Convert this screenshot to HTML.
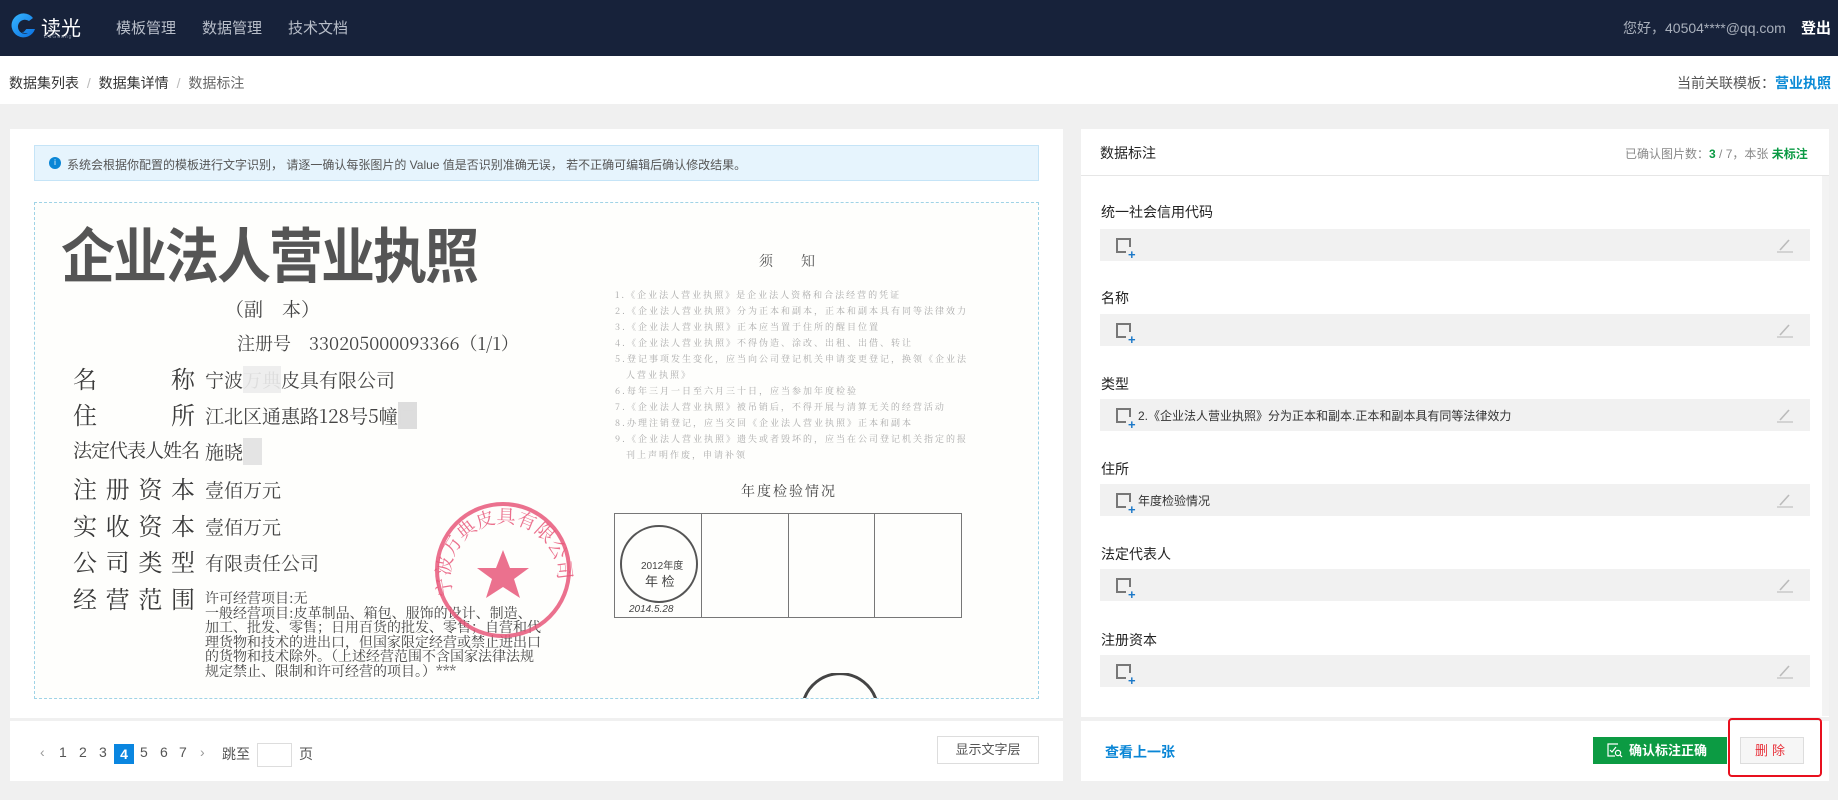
<!DOCTYPE html>
<html><head><meta charset="utf-8"><style>
*{margin:0;padding:0;box-sizing:border-box}
body{width:1838px;height:800px;background:#f0f0f0;font-family:"Liberation Sans","Noto Sans CJK SC",sans-serif;position:relative;overflow:hidden;color:#333}
.a{position:absolute;white-space:nowrap}
.hdr{position:absolute;left:0;top:0;width:1838px;height:56px;background:#17223a}
.nav{color:#b8bec9;font-size:15px;top:17px}
.bc{position:absolute;left:0;top:56px;width:1838px;height:48px;background:#fff}
.card{position:absolute;background:#fff}
.serif{font-family:"Noto Serif CJK SC",serif;color:#444}
.lbl{font-size:24px;color:#3a3a3a;display:flex;justify-content:space-between;width:122px;left:38px}
.note{font-family:"Noto Serif CJK SC",serif;font-size:9px;color:#aaa;letter-spacing:2px}
.fl{font-size:14px;color:#222;left:1101px}
.fb{position:absolute;left:1100px;width:710px;height:32px;background:#f1f1f1}
.ic{position:absolute;left:16px;top:9px;width:13px;height:13px;border:2px solid #777;border-right:none;border-bottom:none}
.ic:after{content:"";position:absolute;left:-2px;top:11px;width:10px;height:2px;background:#777}
.ic:before{content:"";position:absolute;left:11px;top:-2px;width:2px;height:9px;background:#777}
.ic i{position:absolute;left:10px;top:11px;color:#1a78c8;font-style:normal;font-size:13px;font-weight:bold;line-height:8px}
.pen{position:absolute;right:16px;top:8px;width:18px;height:16px}
.ft{font-size:12px;color:#333;left:38px;top:8px}
.pg{font-size:14px;color:#555;top:744px}
.val{left:170px;font-size:19px}
</style></head><body>
<div class="hdr"></div>
<svg class="a" style="left:9px;top:12px" width="28" height="29" viewBox="0 0 28 29"><defs><linearGradient id="g" x1="0" y1="0" x2="1" y2="1"><stop offset="0" stop-color="#37b6ff"/><stop offset="1" stop-color="#0a6fe0"/></linearGradient></defs><path d="M24 6 A12 12 0 1 0 26 17 L16 17 L13 21 L19 21 A7 7 0 1 1 20 9 Z" fill="url(#g)"/><path d="M18 9 L12 16 L16 16 L13 22 L20 14 L16 14Z" fill="#17223a"/></svg>
<div class="a" style="left:41px;top:12px;color:#fff;font-size:20px">读光</div>
<div class="a" style="left:44px;top:34px;color:#8891a0;font-size:5px;letter-spacing:1px">DuGuang</div>
<div class="a nav" style="left:116px">模板管理</div>
<div class="a nav" style="left:202px">数据管理</div>
<div class="a nav" style="left:288px">技术文档</div>
<div class="a" style="left:1623px;top:18px;color:#a9b0bc;font-size:14px">您好，40504****@qq.com</div>
<div class="a" style="left:1801px;top:17px;color:#fff;font-size:15px;font-weight:bold">登出</div>
<div class="bc"></div>
<div class="a" style="left:9px;top:73px;font-size:14px;color:#333">数据集列表 <span style="color:#bbb;margin:0 4px">/</span> 数据集详情 <span style="color:#bbb;margin:0 4px">/</span> <span style="color:#666">数据标注</span></div>
<div class="a" style="left:1677px;top:73px;font-size:14px;color:#555">当前关联模板：<span style="color:#0a8ad6;font-weight:bold">营业执照</span></div>

<div class="card" style="left:10px;top:129px;width:1053px;height:589px"></div>
<div class="card" style="left:10px;top:721px;width:1053px;height:60px"></div>
<div class="card" style="left:1081px;top:129px;width:748px;height:588px"></div>
<div class="card" style="left:1081px;top:721px;width:748px;height:60px"></div>
<div class="a" style="left:1081px;top:175px;width:748px;height:1px;background:#e6e6e6"></div>
<div class="a" style="left:1822px;top:176px;width:7px;height:540px;background:#f3f3f3"></div>

<div class="a" style="left:34px;top:145px;width:1005px;height:36px;background:#e6f4fd;border:1px solid #c5e4f7"></div>
<div class="a" style="left:49px;top:157px;width:12px;height:12px;border-radius:50%;background:#0a86d6;color:#fff;font-size:8px;text-align:center;line-height:12px">i</div>
<div class="a" style="left:67px;top:156px;font-size:12px;color:#555">系统会根据你配置的模板进行文字识别， 请逐一确认每张图片的 Value 值是否识别准确无误， 若不正确可编辑后确认修改结果。</div>

<div class="a" style="left:34px;top:202px;width:1005px;height:497px;border:1px dashed #9fd3e6;background:#fefefc;overflow:hidden">
<div class="a" style="left:26px;top:5px;font-size:54px;font-weight:bold;color:#555;transform:scaleY(1.1);transform-origin:top left;font-family:'Noto Sans CJK SC',sans-serif;letter-spacing:-2px">企业法人营业执照</div>
<div class="a serif" style="left:190px;top:92px;font-size:19px">（副　本）</div>
<div class="a serif" style="left:202px;top:127px;font-size:18px">注册号　330205000093366（1/1）</div>
<div class="a serif lbl" style="top:157px"><span>名</span><span>称</span></div>
<div class="a serif lbl" style="top:193px"><span>住</span><span>所</span></div>
<div class="a serif" style="left:38px;top:233px;font-size:19px;letter-spacing:-1px;color:#3a3a3a">法定代表人姓名</div>
<div class="a serif lbl" style="top:267px"><span>注</span><span>册</span><span>资</span><span>本</span></div>
<div class="a serif lbl" style="top:304px"><span>实</span><span>收</span><span>资</span><span>本</span></div>
<div class="a serif lbl" style="top:340px"><span>公</span><span>司</span><span>类</span><span>型</span></div>
<div class="a serif lbl" style="top:377px"><span>经</span><span>营</span><span>范</span><span>围</span></div>
<div class="a serif val" style="top:163px">宁波<span style="color:#ddd;background:#eee">万典</span>皮具有限公司</div>
<div class="a serif val" style="top:199px">江北区通惠路128号5幢<span style="background:#ddd;color:#ddd">口</span></div>
<div class="a serif val" style="top:235px">施晓<span style="background:#e4e4e4;color:#e4e4e4">口</span></div>
<div class="a serif val" style="top:273px">壹佰万元</div>
<div class="a serif val" style="top:310px">壹佰万元</div>
<div class="a serif val" style="top:346px">有限责任公司</div>
<div class="a serif" style="left:170px;top:388px;font-size:14px;line-height:14.6px">许可经营项目:无<br>一般经营项目:皮革制品、箱包、服饰的设计、制造、<br>加工、批发、零售；日用百货的批发、零售；自营和代<br>理货物和技术的进出口，但国家限定经营或禁止进出口<br>的货物和技术除外。（上述经营范围不含国家法律法规<br>规定禁止、限制和许可经营的项目。）***</div>
<svg class="a" style="left:396px;top:292px" width="150" height="150"><defs><path id="arc" d="M22 100 A54 54 0 1 1 124 100"/></defs><circle cx="72" cy="75" r="66" fill="none" stroke="#e8587a" stroke-width="4" opacity=".85"/><polygon points="72,55 79,73 98,73 83,84 89,103 72,92 55,103 61,84 46,73 65,73" fill="#e8587a" opacity=".85"/><text fill="#e8587a" font-size="19" font-family="Noto Serif CJK SC" opacity=".85"><textPath href="#arc">宁波万典皮具有限公司</textPath></text></svg>
<div class="a" style="left:724px;top:48px;font-size:14px;color:#555;font-family:'Noto Serif CJK SC',serif">须　　知</div>
<div class="a note" style="left:580px;top:84px;line-height:16px">1.《企业法人营业执照》是企业法人资格和合法经营的凭证<br>2.《企业法人营业执照》分为正本和副本，正本和副本具有同等法律效力<br>3.《企业法人营业执照》正本应当置于住所的醒目位置<br>4.《企业法人营业执照》不得伪造、涂改、出租、出借、转让<br>5.登记事项发生变化，应当向公司登记机关申请变更登记，换领《企业法<br>　人营业执照》<br>6.每年三月一日至六月三十日，应当参加年度检验<br>7.《企业法人营业执照》被吊销后，不得开展与清算无关的经营活动<br>8.办理注销登记，应当交回《企业法人营业执照》正本和副本<br>9.《企业法人营业执照》遗失或者毁坏的，应当在公司登记机关指定的报<br>　刊上声明作废，申请补领</div>
<div class="a" style="left:706px;top:278px;font-size:14px;color:#444;font-family:'Noto Serif CJK SC',serif;letter-spacing:2px">年度检验情况</div>
<div class="a" style="left:579px;top:310px;width:348px;height:105px;border:1px solid #777;display:flex">
<div style="flex:1;border-right:1px solid #777"></div><div style="flex:1;border-right:1px solid #777"></div><div style="flex:1;border-right:1px solid #777"></div><div style="flex:1"></div></div>
<svg class="a" style="left:576px;top:313px" width="92" height="100"><circle cx="48" cy="48" r="38" fill="none" stroke="#555" stroke-width="2"/><text x="30" y="53" font-size="10" fill="#444">2012年度</text><text x="34" y="70" font-size="13" fill="#444">年 检</text><text x="18" y="96" font-size="10" fill="#444" font-style="italic">2014.5.28</text></svg>
<svg class="a" style="left:760px;top:470px" width="90" height="30"><path d="M8 30 A38 38 0 0 1 82 30" fill="none" stroke="#444" stroke-width="3"/></svg>
</div>

<div class="a pg" style="left:40px;color:#999">‹</div>
<div class="a pg" style="left:59px">1</div><div class="a pg" style="left:79px">2</div><div class="a pg" style="left:99px">3</div>
<div class="a" style="left:114px;top:744px;width:20px;height:20px;background:#0a86e0;color:#fff;font-size:14px;font-weight:bold;text-align:center;line-height:20px">4</div>
<div class="a pg" style="left:140px">5</div><div class="a pg" style="left:160px">6</div><div class="a pg" style="left:179px">7</div>
<div class="a pg" style="left:200px;color:#999">›</div>
<div class="a pg" style="left:222px">跳至</div>
<div class="a" style="left:257px;top:743px;width:35px;height:24px;border:1px solid #ddd"></div>
<div class="a pg" style="left:299px">页</div>
<div class="a" style="left:937px;top:736px;width:102px;height:28px;border:1px solid #ddd;font-size:13px;color:#555;text-align:center;line-height:26px">显示文字层</div>

<div class="a" style="left:1100px;top:143px;font-size:14px;color:#222">数据标注</div>
<div class="a" style="left:1625px;top:145px;font-size:12px;color:#888">已确认图片数：<b style="color:#0a9a44">3</b> / 7，本张 <b style="color:#0a9a44">未标注</b></div>

<div class="a fl" style="top:202px">统一社会信用代码</div>
<div class="fb" style="top:229px"><div class="ic"><i>+</i></div><svg class="pen" viewBox="0 0 18 16"><path d="M4 13 L13 3" stroke="#bbb" stroke-width="1.6"/><path d="M1 15 H17" stroke="#ccc" stroke-width="1.6"/></svg></div>
<div class="a fl" style="top:288px">名称</div>
<div class="fb" style="top:314px"><div class="ic"><i>+</i></div><svg class="pen" viewBox="0 0 18 16"><path d="M4 13 L13 3" stroke="#bbb" stroke-width="1.6"/><path d="M1 15 H17" stroke="#ccc" stroke-width="1.6"/></svg></div>
<div class="a fl" style="top:374px">类型</div>
<div class="fb" style="top:399px"><div class="ic"><i>+</i></div><div class="a ft">2.《企业法人营业执照》分为正本和副本.正本和副本具有同等法律效力</div><svg class="pen" viewBox="0 0 18 16"><path d="M4 13 L13 3" stroke="#bbb" stroke-width="1.6"/><path d="M1 15 H17" stroke="#ccc" stroke-width="1.6"/></svg></div>
<div class="a fl" style="top:459px">住所</div>
<div class="fb" style="top:484px"><div class="ic"><i>+</i></div><div class="a ft">年度检验情况</div><svg class="pen" viewBox="0 0 18 16"><path d="M4 13 L13 3" stroke="#bbb" stroke-width="1.6"/><path d="M1 15 H17" stroke="#ccc" stroke-width="1.6"/></svg></div>
<div class="a fl" style="top:544px">法定代表人</div>
<div class="fb" style="top:569px"><div class="ic"><i>+</i></div><svg class="pen" viewBox="0 0 18 16"><path d="M4 13 L13 3" stroke="#bbb" stroke-width="1.6"/><path d="M1 15 H17" stroke="#ccc" stroke-width="1.6"/></svg></div>
<div class="a fl" style="top:630px">注册资本</div>
<div class="fb" style="top:655px"><div class="ic"><i>+</i></div><svg class="pen" viewBox="0 0 18 16"><path d="M4 13 L13 3" stroke="#bbb" stroke-width="1.6"/><path d="M1 15 H17" stroke="#ccc" stroke-width="1.6"/></svg></div>

<div class="a" style="left:1105px;top:742px;font-size:14px;color:#0a86d6;font-weight:bold">查看上一张</div>
<div class="a" style="left:1593px;top:737px;width:134px;height:27px;background:#0c9b43;color:#fff;font-size:13px;font-weight:bold;line-height:27px;padding-left:36px">确认标注正确</div>
<svg class="a" style="left:1607px;top:743px" width="16" height="15"><path d="M11 1 H1 V13 H8" fill="none" stroke="#fff" stroke-width="1.2"/><path d="M3 7 L5 9 L9 4" fill="none" stroke="#fff" stroke-width="1.2"/><circle cx="11" cy="10" r="2.6" fill="none" stroke="#fff" stroke-width="1.2"/><path d="M13 12 L15 14" stroke="#fff" stroke-width="1.2"/></svg>
<div class="a" style="left:1740px;top:737px;width:64px;height:27px;background:#f6f6f6;border:1px solid #ddd;color:#e8303a;font-size:13px;text-align:center;line-height:25px;letter-spacing:4px">删除</div>
<div class="a" style="left:1728px;top:718px;width:94px;height:59px;border:2px solid #e8101e;border-radius:4px"></div>
</body></html>
